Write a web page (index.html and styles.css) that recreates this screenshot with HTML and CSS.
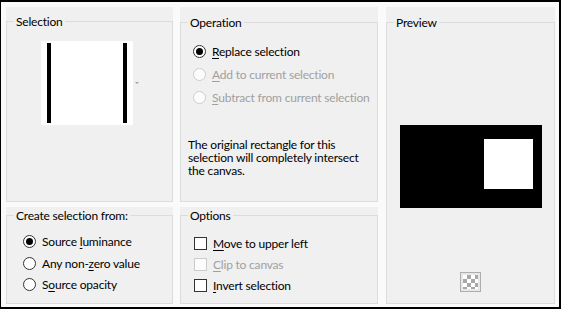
FILE: index.html
```html
<!DOCTYPE html>
<html>
<head>
<meta charset="utf-8">
<link rel="stylesheet" href="styles.css">
</head>
<body>
<div class="dialog">
  <div class="grid">
    <div class="group g-selection">
      <div class="frame">
        <span class="legend">Selection</span>
        <div class="thumb-row">
          <div class="thumb"><span class="bar"></span><span class="bar"></span></div>
          <span class="drop"></span>
        </div>
      </div>
    </div>
    <div class="group g-operation">
      <div class="frame">
        <span class="legend">Operation</span>
        <div class="opts op-list">
          <div class="opt"><span class="radio checked"></span><span><u>R</u>eplace selection</span></div>
          <div class="opt disabled"><span class="radio"></span><span><u>A</u>dd to current selection</span></div>
          <div class="opt disabled"><span class="radio"></span><span><u>S</u>ubtract from current selection</span></div>
        </div>
        <p class="note">The original rectangle for this selection will completely intersect the canvas.</p>
      </div>
    </div>
    <div class="group g-preview">
      <div class="frame pv-frame">
        <span class="legend">Preview</span>
        <div class="preview"><div class="pv-white"></div></div>
        <div class="checker-btn"><div class="checker"></div></div>
      </div>
    </div>
    <div class="group g-create">
      <div class="frame">
        <span class="legend">Create selection from:</span>
        <div class="opts cr-list">
          <div class="opt"><span class="radio checked"></span><span>Source <u>l</u>uminance</span></div>
          <div class="opt"><span class="radio"></span><span>Any non-<u>z</u>ero value</span></div>
          <div class="opt"><span class="radio"></span><span>S<u>o</u>urce opacity</span></div>
        </div>
      </div>
    </div>
    <div class="group g-options">
      <div class="frame">
        <span class="legend">Options</span>
        <div class="opts ck-list">
          <div class="opt"><span class="check"></span><span><u>M</u>ove to upper left</span></div>
          <div class="opt disabled"><span class="check"></span><span><u>C</u>lip to canvas</span></div>
          <div class="opt"><span class="check"></span><span><u>I</u>nvert selection</span></div>
        </div>
      </div>
    </div>
  </div>
</div>
</body>
</html>
```

FILE: styles.css
```css
html, body {
  margin: 0;
  padding: 0;
  background: #fff;
}
.dialog {
  width: 561px;
  height: 309px;
  box-sizing: border-box;
  border-style: solid;
  border-color: #000;
  border-width: 2px 2px 2px 1px;
  background: #fafafa;
  padding: 5px 0 0 5px;
  font-family: "Lato", "Liberation Sans", sans-serif;
  font-size: 12px;
  line-height: 13px;
  letter-spacing: -0.2px;
  color: #000;
}
.grid {
  display: grid;
  grid-template-columns: 167px 198px 169px;
  grid-template-rows: 195px 97px;
  column-gap: 7px;
  row-gap: 5px;
}
.group {
  background: #f0f0f0;
  display: flex;
  flex-direction: column;
  box-sizing: border-box;
}
.frame {
  position: relative;
  flex: 1;
  border: 1px solid #dcdcdc;
  box-sizing: border-box;
}
.legend {
  position: absolute;
  top: -8px;
  left: 7px;
  padding: 0 2px;
  background: #f0f0f0;
  line-height: 15px;
}
.g-selection { grid-column: 1; grid-row: 1; padding-top: 14px; }
.g-operation { grid-column: 2; grid-row: 1; padding-top: 15px; }
.g-preview { grid-column: 3; grid-row: 1 / span 2; padding-top: 15px; margin-left: 1px; margin-right: -1px; }
.g-create { grid-column: 1; grid-row: 2; padding-top: 8px; }
.g-options { grid-column: 2; grid-row: 2; padding-top: 8px; }

.thumb-row {
  display: flex;
  align-items: center;
  margin: 19px 0 0 34px;
  gap: 2px;
}
.thumb {
  width: 92px;
  height: 84px;
  box-sizing: border-box;
  background: #fff;
  display: flex;
  justify-content: space-between;
  padding: 2px 6px;
}
.bar {
  width: 4px;
  background: #000;
}
.drop {
  width: 0;
  height: 0;
  border-left: 2px solid transparent;
  border-right: 2px solid transparent;
  border-top: 2px solid #a0a0a0;
}

.opts {
  display: flex;
  flex-direction: column;
}
.opt {
  display: flex;
  align-items: center;
  gap: 6px;
  height: 13px;
}
.opt.disabled { color: #a0a0a0; }
.opt u { text-decoration-thickness: 1px; text-underline-offset: 2px; }

.radio {
  width: 13px;
  height: 13px;
  box-sizing: border-box;
  border: 1px solid #333;
  border-radius: 50%;
  background: #fff;
  position: relative;
  flex: none;
}
.radio.checked::after {
  content: "";
  position: absolute;
  left: 2px;
  top: 2px;
  width: 7px;
  height: 7px;
  border-radius: 50%;
  background: #000;
}
.disabled .radio { border-color: #cccccc; background: #fcfcfc; }
.check {
  width: 13px;
  height: 13px;
  box-sizing: border-box;
  border: 1px solid #333;
  background: #fff;
  flex: none;
}
.disabled .check { border-color: #cccccc; background: #fcfcfc; }

.op-list {
  margin: 22px 0 0 12px;
  gap: 10px;
}
.note {
  margin: 34px 0 0 7px;
  width: 185px;
}
.cr-list {
  margin: 19px 0 0 16px;
  gap: 8.5px;
}
.ck-list {
  margin: 21px 0 0 13px;
  gap: 8px;
}

.pv-frame {
  display: flex;
  flex-direction: column;
  align-items: center;
}
.preview {
  margin-top: 102px;
  width: 142px;
  height: 83px;
  background: #000;
  box-sizing: border-box;
  padding: 14px 0 0 84px;
}
.pv-white {
  width: 49px;
  height: 50px;
  background: #fff;
}
.checker-btn {
  margin-top: 64px;
  width: 21px;
  height: 20px;
  box-sizing: border-box;
  border: 1px solid #adadad;
  background: #e8e8e8;
  padding: 2px;
}
.checker {
  width: 15px;
  height: 14px;
  background-color: #fff;
  background-image:
    linear-gradient(45deg, #a8a8a8 25%, transparent 25%, transparent 75%, #a8a8a8 75%),
    linear-gradient(45deg, #a8a8a8 25%, transparent 25%, transparent 75%, #a8a8a8 75%);
  background-size: 8px 8px;
  background-position: 0 0, 4px 4px;
}
```
